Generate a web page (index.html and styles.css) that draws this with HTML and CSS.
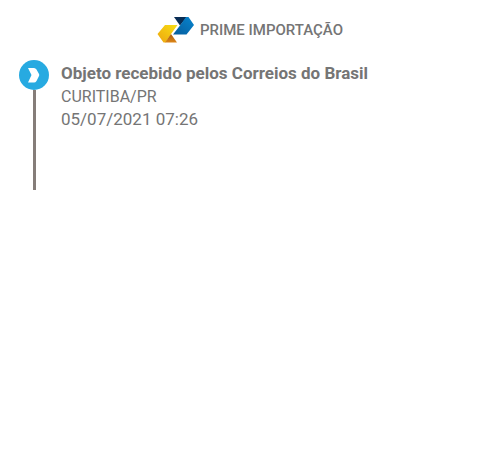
FILE: index.html
```html
<!DOCTYPE html>
<html lang="pt-BR">
<head>
<meta charset="utf-8">
<meta name="viewport" content="width=device-width, initial-scale=1">
<title>Prime Importação</title>
<link rel="stylesheet" href="styles.css">
</head>
<body>
<header class="brand">
  <svg class="brand-logo" viewBox="0 0 37 26" aria-hidden="true">
    <defs>
      <linearGradient id="blue" x1="0" y1="1" x2="1" y2="0">
        <stop offset="0" stop-color="#075c9c"/>
        <stop offset="1" stop-color="#0785cf"/>
      </linearGradient>
      <linearGradient id="yellow" x1="0" y1="1" x2="1" y2="0">
        <stop offset="0" stop-color="#eda510"/>
        <stop offset="1" stop-color="#f8df12"/>
      </linearGradient>
      <linearGradient id="orange" x1="0" y1="0" x2="0" y2="1">
        <stop offset="0" stop-color="#a95a0b"/>
        <stop offset="1" stop-color="#dd8617"/>
      </linearGradient>
    </defs>
    <path fill="url(#yellow)" d="M8 8H20.500L14 17L8.500 25.500H6.500L0.500 17Z"/>
    <path fill="url(#orange)" d="M14 17L20 25.500H8Z"/>
    <path fill="#092d55" d="M17 0H30L23 8.500Z"/>
    <path fill="url(#blue)" d="M29 0H31.500L37 8L29.500 17.500H16L23 8.500Z"/>
  </svg>
  <h1 class="brand-name">PRIME IMPORTAÇÃO</h1>
</header>
<main>
  <ol class="timeline">
    <li class="event">
      <div class="rail">
        <svg class="marker" viewBox="0 0 30 30" aria-hidden="true">
          <circle cx="15" cy="15" r="15" fill="#27aae1"/>
          <path fill="#fff" d="M9 8H15Q16.500 8 17.500 9.500L20 14Q20.500 15 20 16L17.500 21Q16.500 22.500 15 22.500H9L12.500 15Z"/>
        </svg>
      </div>
      <div class="details">
        <h2 class="status">Objeto recebido pelos Correios do Brasil</h2>
        <p class="place">CURITIBA/PR</p>
        <time class="date" datetime="2021-07-05T07:26">05/07/2021 07:26</time>
      </div>
    </li>
  </ol>
</main>
</body>
</html>
```
FILE: styles.css
```css
* {
  box-sizing: border-box;
}

body {
  margin: 0;
  padding: 16px 19px;
  background: #fff;
  color: #757575;
  font-family: Roboto, "Liberation Sans", sans-serif;
}

h1,
h2,
p,
ol {
  margin: 0;
  padding: 0;
}

.brand {
  display: flex;
  align-items: center;
  justify-content: center;
  gap: 6px;
  height: 28px;
}

.brand-logo {
  width: 37px;
  height: 26px;
}

.brand-name {
  font-size: 15px;
  line-height: 24px;
  font-weight: 500;
}

.timeline {
  margin-top: 16px;
  list-style: none;
}

.event {
  display: flex;
  gap: 12px;
  min-height: 130px;
}

.rail {
  display: flex;
  flex-direction: column;
  align-items: center;
  width: 30px;
}

.rail::after {
  content: "";
  flex: 1;
  width: 3px;
  background: #857d79;
}

.marker {
  display: block;
  width: 30px;
  height: 30px;
}

.details {
  padding-top: 2px;
}

.status {
  font-size: 17px;
  line-height: 23px;
  font-weight: 700;
}

.place {
  font-size: 16px;
  line-height: 23px;
}

.date {
  display: block;
  font-size: 17px;
  line-height: 23px;
}
```
